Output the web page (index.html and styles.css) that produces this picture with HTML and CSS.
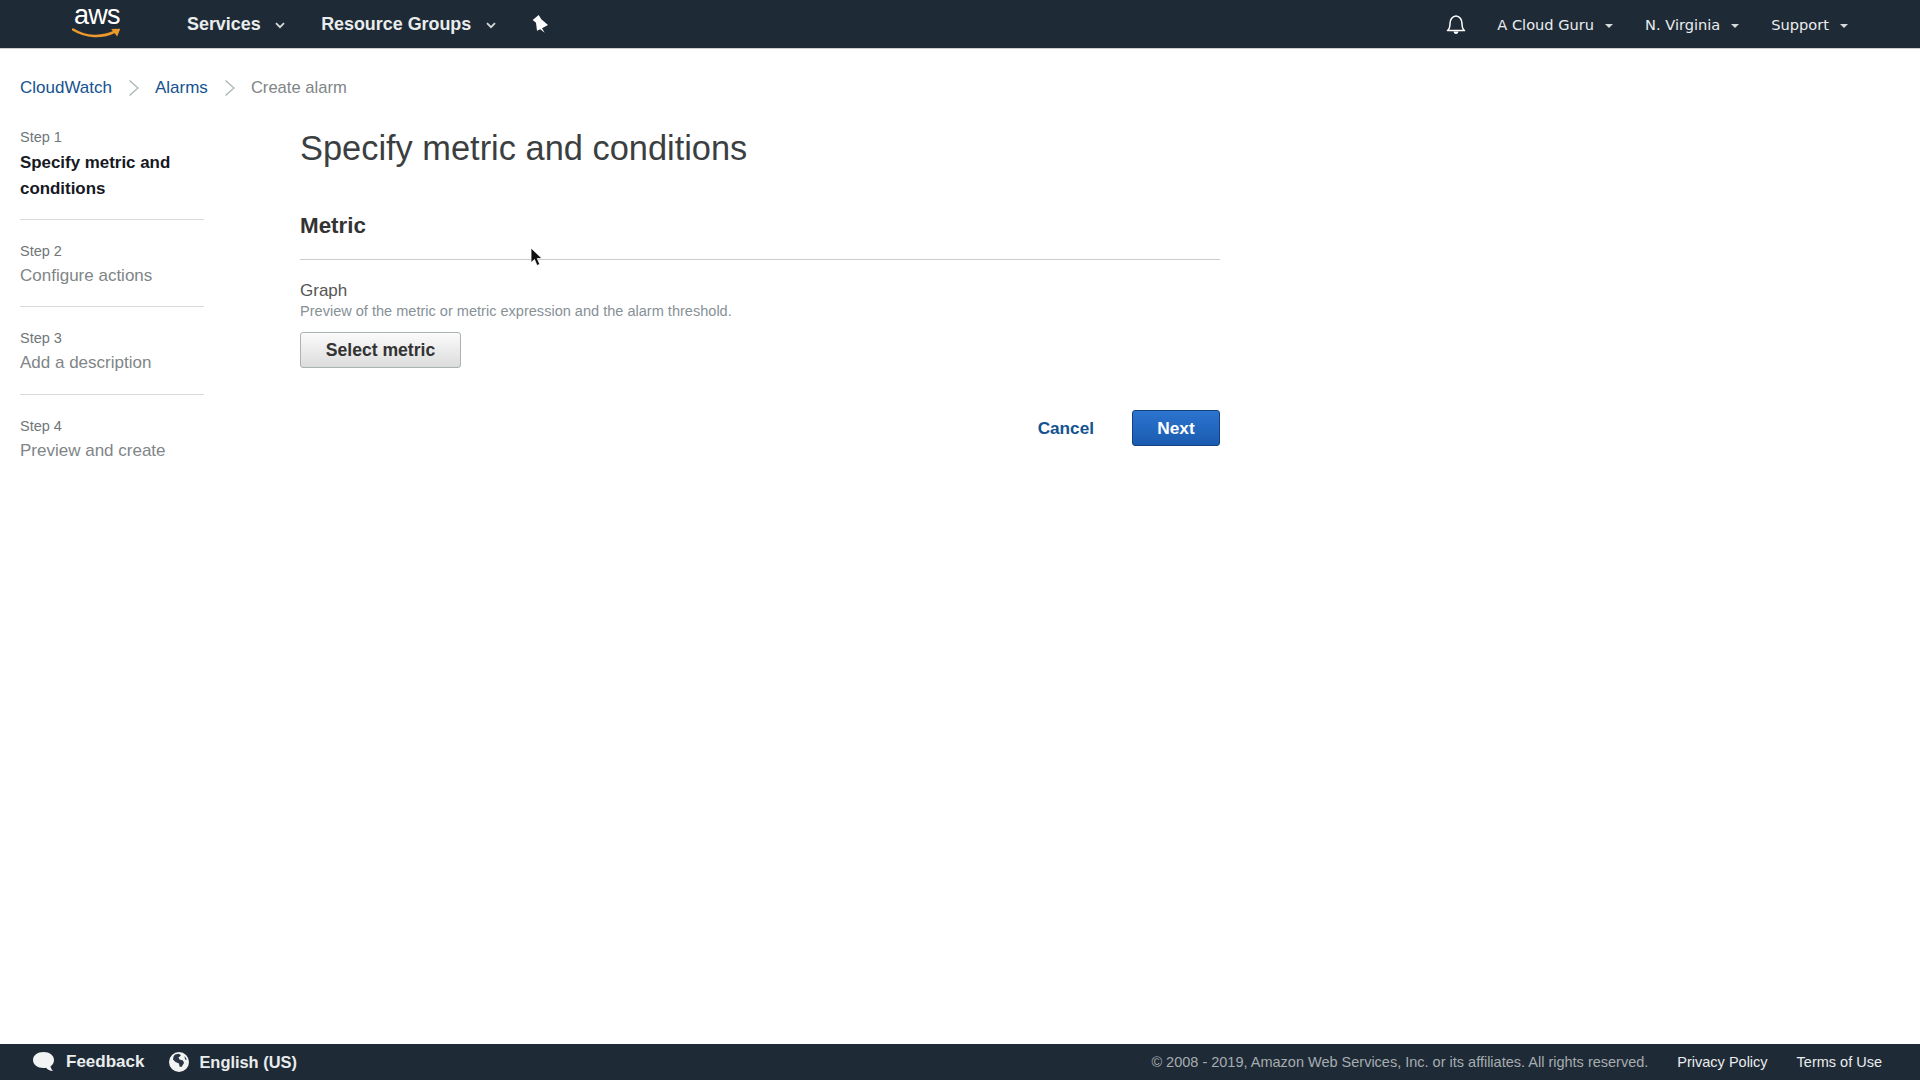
FILE: index.html
```html
<!DOCTYPE html>
<html lang="en">
<head>
<meta charset="utf-8">
<title>Create alarm</title>
<link rel="stylesheet" href="styles.css">
</head>
<body>
<header class="topbar">
  <div class="logo">
    <span class="logo-text">aws</span>
    <svg class="logo-smile" width="50" height="12" viewBox="0 0 50 12"><path d="M1 2.500C14 10.500 30 11 43 4.500" fill="none" stroke="#ec9a2b" stroke-width="2.600" stroke-linecap="round"/><path d="M39 2.500L48 1.500L45.500 9.500Z" fill="#ec9a2b" transform="rotate(4 45 5)"/></svg>
  </div>
  <nav class="nav-left">
    <a class="nav-item">Services<svg class="chev" width="10" height="7" viewBox="0 0 10 7"><path d="M1 1.200L5 5.200L9 1.200" fill="none" stroke="#d5dbdb" stroke-width="1.800"/></svg></a>
    <a class="nav-item">Resource Groups<svg class="chev" width="10" height="7" viewBox="0 0 10 7"><path d="M1 1.200L5 5.200L9 1.200" fill="none" stroke="#d5dbdb" stroke-width="1.800"/></svg></a>
    <svg class="pin" width="17" height="19" viewBox="0 0 17 19"><path d="M0.700 5L6.700 0L9.300 4.300L16 10L10 13.300L12.700 17.700L8.300 14.300L5 15.700L4 7.700Z" fill="#fff"/></svg>
  </nav>
  <div class="nav-right">
    <svg class="bell" width="20" height="21" viewBox="0 0 20 21"><path d="M1.500 16.500C3.500 15 4 13 4 9.500C4 5.500 6.500 2 10 2C13.500 2 16 5.500 16 9.500C16 13 16.500 15 18.500 16.500Z" fill="none" stroke="#fff" stroke-width="1.500" stroke-linejoin="round"/><path d="M7.500 17.500H12.500C12.300 19 11.300 20 10 20C8.700 20 7.700 19 7.500 17.500Z" fill="#fff"/></svg>
    <a class="acct">A Cloud Guru<i class="tri"></i></a>
    <a class="acct">N. Virginia<i class="tri"></i></a>
    <a class="acct">Support<i class="tri"></i></a>
  </div>
</header>

<main class="page">
  <div class="crumbs">
    <a class="crumb-link">CloudWatch</a>
    <svg class="crumb-sep" width="12" height="18" viewBox="0 0 12 18"><path d="M1.500 1.500L10 9L1.500 16.500" fill="none" stroke="#aab7b8" stroke-width="1.300"/></svg>
    <a class="crumb-link">Alarms</a>
    <svg class="crumb-sep" width="12" height="18" viewBox="0 0 12 18"><path d="M1.500 1.500L10 9L1.500 16.500" fill="none" stroke="#aab7b8" stroke-width="1.300"/></svg>
    <span class="crumb-current">Create alarm</span>
  </div>
  <div class="layout">
    <aside class="steps">
      <div class="step step-active">
        <div class="step-num">Step 1</div>
        <div class="step-name">Specify metric and conditions</div>
      </div>
      <div class="step">
        <div class="step-num">Step 2</div>
        <div class="step-name">Configure actions</div>
      </div>
      <div class="step">
        <div class="step-num">Step 3</div>
        <div class="step-name">Add a description</div>
      </div>
      <div class="step">
        <div class="step-num">Step 4</div>
        <div class="step-name">Preview and create</div>
      </div>
    </aside>
    <section class="content">
      <h1 class="title">Specify metric and conditions</h1>
      <h2 class="section-title">Metric</h2>
      <div class="field-label">Graph</div>
      <div class="field-desc">Preview of the metric or metric expression and the alarm threshold.</div>
      <button class="btn btn-default">Select metric</button>
      <div class="actions">
        <a class="cancel">Cancel</a>
        <button class="btn btn-primary">Next</button>
      </div>
    </section>
  </div>
  <svg class="cursor" width="14" height="21" viewBox="0 0 14 21"><path d="M1 1V15.500L4.500 12.500L7 18.500L9.800 17.300L7.300 11.500H12Z" fill="#111" stroke="#fff" stroke-width="0.800"/></svg>
</main>

<footer class="footer">
  <div class="foot-left">
    <a class="foot-item"><svg width="24" height="22" viewBox="0 0 24 22"><path d="M11.500 1C17.500 1 22 4.500 22 9C22 12 20.500 14 18.500 15.200C18.800 17 19.600 18.600 21 20C18 19.800 15.500 18.500 14 16.700C13 16.900 12.300 17 11.500 17C5.500 17 1 13.500 1 9C1 4.500 5.500 1 11.500 1Z" fill="#f2f3f3"/></svg>Feedback</a>
    <a class="foot-item foot-lang"><svg width="20" height="20" viewBox="0 0 20 20"><circle cx="10" cy="10" r="10" fill="#f2f3f3"/><path d="M6 2.500L10 1.800L12 3.500L9.500 5.500L10.500 7.500L14 8.500L15 11L12.500 15L10.500 14.500L10 11.500L6.500 10L4 7.500L4.500 4.500Z" fill="#2b3644"/><path d="M15.500 4L18 7.500L16 7.500Z" fill="#2b3644"/></svg>English (US)</a>
  </div>
  <div class="foot-right">
    <span class="copyright">© 2008 - 2019, Amazon Web Services, Inc. or its affiliates. All rights reserved.</span>
    <a class="foot-link">Privacy Policy</a>
    <a class="foot-link">Terms of Use</a>
  </div>
</footer>
</body>
</html>
```
FILE: styles.css
```css
* { box-sizing: border-box; }
html, body { height: 100%; }
body {
  margin: 0;
  display: flex;
  flex-direction: column;
  height: 1080px;
  overflow: hidden;
  background: #fff;
  font-family: "Liberation Sans", Arial, sans-serif;
  color: #444;
}
.topbar {
  flex: 0 0 49px;
  display: flex;
  align-items: center;
  background: #1f2a37;
  border-bottom: 1px solid #c8cccc;
  padding: 0 72px 0 71px;
}
.logo {
  width: 116px;
  height: 48px;
  position: relative;
  flex: none;
}
.logo-text {
  position: absolute;
  left: 3px;
  top: 5px;
  font-family: "Liberation Sans", sans-serif;
  font-size: 27px;
  line-height: 20px;
  letter-spacing: -0.8px;
  color: #fff;
}
.logo-smile {
  position: absolute;
  left: 1px;
  top: 27px;
}
.nav-left {
  display: flex;
  align-items: center;
  flex: 1;
  padding-top: 1px;
}
.nav-item {
  display: flex;
  align-items: center;
  font-size: 17.900px;
  font-weight: 700;
  color: #eaeded;
  margin-right: 36px;
}
.chev { margin-left: 14.500px; margin-top: 2px; }
.pin { margin-left: 0; }
.nav-right {
  display: flex;
  align-items: center;
  padding-top: 1px;
}
.bell { margin-right: 31px; }
.acct {
  display: flex;
  align-items: center;
  font-family: "DejaVu Sans", sans-serif;
  font-size: 14.600px;
  color: #eaeded;
  margin-right: 32px;
}
.acct:last-child { margin-right: 0; }
.tri {
  width: 0;
  height: 0;
  margin-left: 11px;
  margin-top: 2px;
  border-left: 4.500px solid transparent;
  border-right: 4.500px solid transparent;
  border-top: 4.500px solid #d5dbdb;
}
.page {
  flex: 1;
  position: relative;
  padding: 29px 20px 0;
}
.crumbs {
  display: flex;
  align-items: center;
  height: 20px;
  font-size: 17px;
}
.crumb-link { color: #15528f; }
.crumb-sep { margin: 0 15px 0 16px; }
.crumb-current { color: #808587; font-size: 16.600px; }
.layout {
  display: flex;
  margin-top: 29px;
}
.steps {
  width: 184px;
  flex: none;
}
.step {
  padding: 21px 0 17.500px;
  border-bottom: 1px solid #d5dbdb;
}
.step:first-child { padding-top: 0; padding-bottom: 16.500px; }
.step:last-child { border-bottom: 0; }
.step-num {
  font-size: 14.500px;
  line-height: 20px;
  color: #6f7678;
}
.step-name {
  font-size: 17px;
  line-height: 26px;
  color: #808587;
  margin-top: 2px;
}
.step-active .step-name {
  font-size: 16.900px;
  font-weight: 700;
  color: #16191f;
  margin-top: 3px;
}
.content {
  width: 920px;
  margin-left: 96px;
}
.title {
  margin: 0;
  font-size: 34.400px;
  font-weight: 400;
  line-height: 42px;
  color: #3b3f42;
}
.section-title {
  margin: 41px 0 0;
  padding-bottom: 18px;
  border-bottom: 1px solid #c9cdcd;
  font-size: 22.400px;
  line-height: 31px;
  font-weight: 700;
  color: #333;
}
.field-label {
  margin-top: 21px;
  font-size: 17px;
  line-height: 20px;
  color: #555;
}
.field-desc {
  font-size: 14.550px;
  line-height: 20px;
  color: #879196;
}
.btn {
  display: block;
  font-family: inherit;
  font-size: 17.300px;
  font-weight: 700;
  height: 36px;
  border-radius: 3px;
  padding: 0;
}
.btn-default {
  width: 161px;
  margin-top: 11px;
  font-size: 17.600px;
  color: #333;
  background: linear-gradient(#fbfbfb, #dcdcdc);
  border: 1px solid #aab2b3;
}
.actions {
  display: flex;
  justify-content: flex-end;
  align-items: center;
  margin-top: 42px;
}
.cancel {
  font-size: 17.200px;
  font-weight: 700;
  color: #15528f;
  margin-right: 38px;
}
.btn-primary {
  width: 88px;
  color: #fff;
  background: linear-gradient(#2c74cf, #1a5bb0);
  border: 1px solid #12417f;
}
.cursor {
  position: absolute;
  left: 530px;
  top: 198px;
}
.footer {
  flex: 0 0 36px;
  display: flex;
  justify-content: space-between;
  align-items: center;
  background: #1f2a37;
  padding: 0 38px 0 32px;
}
.foot-left, .foot-right { display: flex; align-items: center; }
.foot-item {
  display: flex;
  align-items: center;
  font-size: 17px;
  font-weight: 700;
  color: #eaeded;
  margin-right: 25px;
}
.foot-lang { font-size: 16.400px; }
.foot-item svg { margin-right: 10px; }
.copyright { font-size: 14.500px; color: #a6adb0; }
.foot-link { font-size: 14.500px; color: #eaeded; margin-left: 29px; }
```
